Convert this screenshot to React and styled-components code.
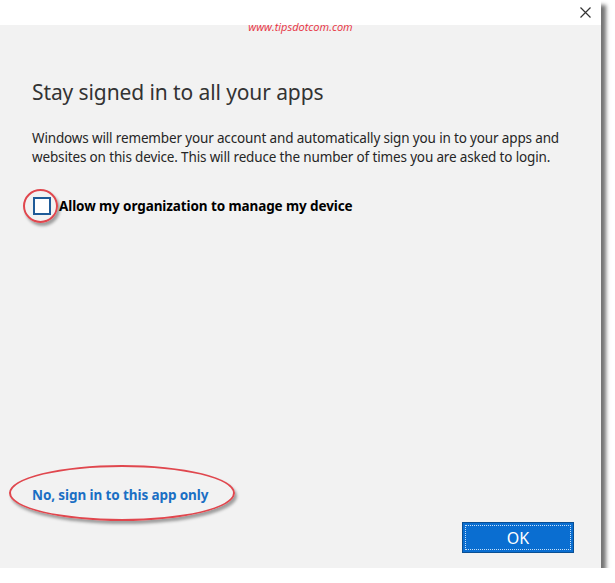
import React from 'react'
import styled, { createGlobalStyle } from 'styled-components'

const Global = createGlobalStyle`
  body {
    margin: 0;
    background: #ffffff;
    font-family: "Noto Sans", "Open Sans", sans-serif;
  }
`

const Window = styled.div`
  position: relative;
  width: 601px;
  height: 568px;
  display: flex;
  flex-direction: column;
  background: #f2f2f2;
  box-shadow: 5px 5px 4px rgba(0, 0, 0, 0.55);
`

const TitleBar = styled.div`
  height: 25px;
  background: #ffffff;
  display: flex;
  justify-content: flex-end;
  align-items: center;
  padding-right: 9px;
`

const CloseButton = styled.button`
  border: none;
  background: transparent;
  padding: 0;
  width: 14px;
  height: 14px;
  display: flex;
  align-items: center;
  justify-content: center;
`

const Watermark = styled.div`
  position: absolute;
  top: 19px;
  left: 0;
  right: 0;
  text-align: center;
  color: #e8313f;
  font-style: italic;
  font-size: 11px;
  font-family: "Open Sans", sans-serif;
`

const Body = styled.div`
  flex: 1;
  display: flex;
  flex-direction: column;
  padding: 53px 32px 15px 32px;
`

const Heading = styled.h1`
  margin: 0;
  font-weight: 400;
  font-size: 21px;
  color: #333333;
  letter-spacing: -0.1px;
`

const Message = styled.p`
  margin: 23px 0 0 0;
  font-size: 13.5px;
  line-height: 19px;
  color: #262626;
  letter-spacing: -0.15px;
`

const CheckRow = styled.label`
  position: relative;
  display: flex;
  align-items: center;
  gap: 8px;
  margin-top: 30px;
  font-size: 13.5px;
  font-weight: 700;
  color: #000;
  letter-spacing: -0.1px;
`

const Box = styled.span`
  width: 18px;
  height: 18px;
  border: 2px solid #1f5b98;
  background: #ffffff;
  box-sizing: border-box;
  margin-left: 1px;
`

const Ring = styled.span`
  position: absolute;
  left: ${p => p.$left}px;
  top: ${p => p.$top}px;
  width: ${p => p.$w}px;
  height: ${p => p.$h}px;
  border: 2.5px solid #e0474e;
  border-radius: 50%;
  box-sizing: border-box;
  box-shadow: 2px 3px 3px rgba(0, 0, 0, 0.35);
  pointer-events: none;
`

const Footer = styled.div`
  margin-top: auto;
  display: flex;
  flex-direction: column;
`

const LinkRow = styled.div`
  position: relative;
  align-self: flex-start;
`

const Link = styled.a`
  color: #1a6fc4;
  font-weight: 700;
  font-size: 13.5px;
  letter-spacing: -0.1px;
  text-decoration: none;
`

const OkButton = styled.button`
  align-self: flex-end;
  margin-top: 17px;
  margin-right: -5px;
  width: 112px;
  height: 31px;
  background: #0a6ed1;
  border: 1px solid #0a4f93;
  outline: 1px dotted #c8e0f7;
  outline-offset: -4px;
  color: #ffffff;
  font-size: 16px;
  font-family: "Noto Sans", sans-serif;
`

export default function App() {
  return (
    <>
      <Global />
      <Window>
        <TitleBar>
          <CloseButton aria-label="Close">
            <svg width="11" height="11" viewBox="0 0 11 11">
              <path d="M0.5 0.5 L10.5 10.5 M10.5 0.5 L0.5 10.5" stroke="#333" strokeWidth="1.2" />
            </svg>
          </CloseButton>
        </TitleBar>
        <Watermark>www.tipsdotcom.com</Watermark>
        <Body>
          <Heading>Stay signed in to all your apps</Heading>
          <Message>
            Windows will remember your account and automatically sign you in to your apps and
            websites on this device. This will reduce the number of times you are asked to login.
          </Message>
          <CheckRow>
            <Box />
            Allow my organization to manage my device
            <Ring $left={-9} $top={-8} $w={35} $h={34} />
          </CheckRow>
          <Footer>
            <LinkRow>
              <Link href="#">No, sign in to this app only</Link>
              <Ring $left={-23} $top={-18} $w={226} $h={56} />
            </LinkRow>
            <OkButton>OK</OkButton>
          </Footer>
        </Body>
      </Window>
    </>
  )
}
